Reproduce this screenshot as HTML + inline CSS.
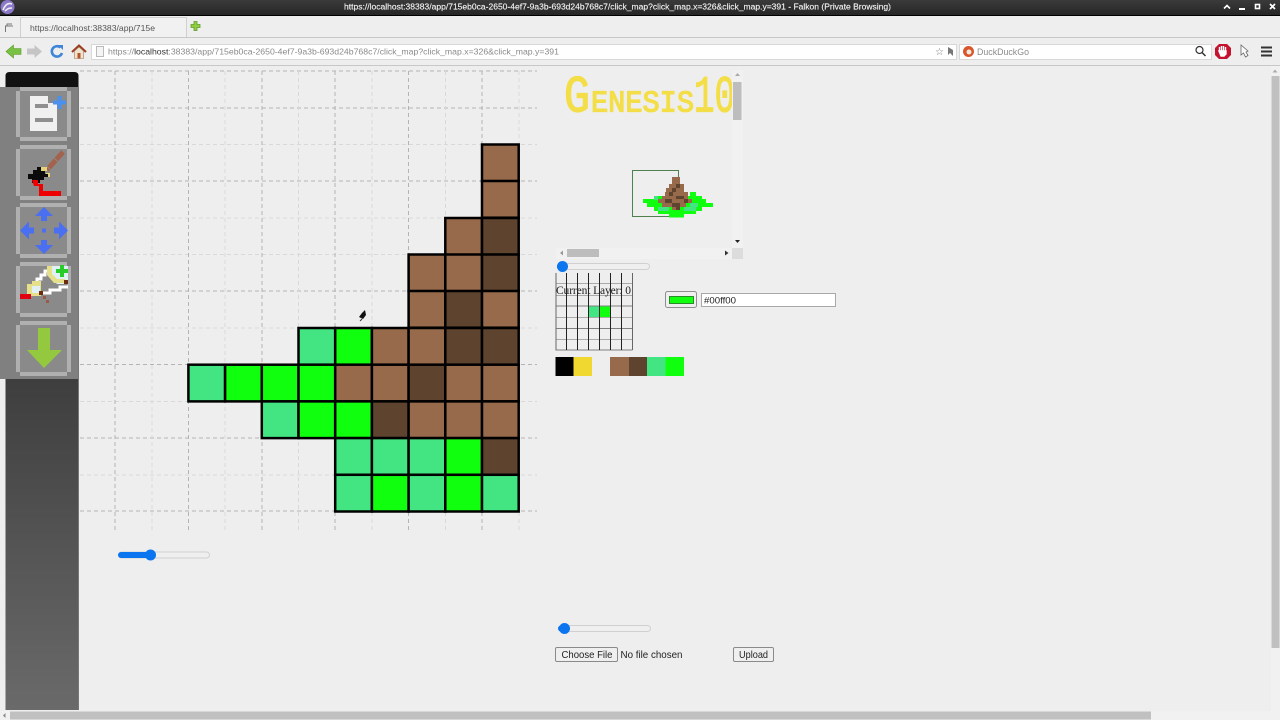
<!DOCTYPE html>
<html><head><meta charset="utf-8"><title>Falkon</title>
<style>
html,body{margin:0;padding:0;width:1280px;height:720px;overflow:hidden;background:#eee}
svg{display:block;position:absolute;left:0;top:0;filter:blur(.35px)}
text{font-family:"Liberation Sans",sans-serif}
.d{stroke:#b4b4b4;stroke-width:1;stroke-dasharray:4 3;fill:none}
.l{stroke:#d9d9d9;stroke-width:1;stroke-dasharray:4 3;fill:none}
.c rect{width:36.7px;height:36.7px;stroke:#000;stroke-width:2.5}
.b{fill:#966a4a}.k{fill:#5e432e}.m{fill:#42e582}.g{fill:#0fff0f}
.btn{fill:#b0b0b0}.inner{fill:#8a8a8a}
</style></head><body>
<svg width="1280" height="720" viewBox="0 0 1280 720" xmlns="http://www.w3.org/2000/svg">
<defs>
<linearGradient id="tb" x1="0" y1="0" x2="0" y2="1"><stop offset="0" stop-color="#3a3a3a"/><stop offset="1" stop-color="#262626"/></linearGradient>
<linearGradient id="sb" x1="0" y1="0" x2="0" y2="1"><stop offset="0" stop-color="#3e3e3e"/><stop offset="1" stop-color="#6a6a6a"/></linearGradient>
<clipPath id="gc"><rect x="555" y="70" width="178" height="50"/></clipPath>
</defs>
<rect width="1280" height="720" fill="#eee"/>

<!-- title bar -->
<rect width="1280" height="15" fill="url(#tb)"/>
<rect y="15" width="1280" height="1" fill="#000"/>
<circle cx="7.500" cy="7" r="7" fill="#8b78c8"/><path d="M3 10 C6 3 9 3 12 4 M5 11 C8 8 10 8 12 8" stroke="#eee" stroke-width="1.600" fill="none"/>
<text x="344" y="9.500" font-size="8.500" fill="#f0f0f0" stroke="#f0f0f0" stroke-width=".15" textLength="547" lengthAdjust="spacingAndGlyphs">https://localhost:38383/app/715eb0ca-2650-4ef7-9a3b-693d24b768c7/click_map?click_map.x=326&amp;click_map.y=391 - Falkon (Private Browsing)</text>
<path d="M1224 8.500 L1227 5.500 L1230 8.500" stroke="#fff" stroke-width="1.600" fill="none"/>
<rect x="1239" y="8" width="6" height="2" fill="#fff"/>
<rect x="1255.500" y="4.500" width="4" height="4" fill="none" stroke="#fff" stroke-width="1.600"/>
<path d="M1270 4 L1275 9 M1275 4 L1270 9" stroke="#fff" stroke-width="1.700"/>

<!-- tab bar -->
<rect y="37" width="1280" height="1" fill="#c8c8c8"/>
<path d="M5.500 32 V26 H13 M7 26 V24 H12" stroke="#777" stroke-width="1" fill="none"/>
<path d="M20.500 37 V17.500 H186.500 V37" fill="#f1f1f1" stroke="#cfcfcf"/>
<text x="30" y="31" font-size="8.500" fill="#555" textLength="125" lengthAdjust="spacingAndGlyphs">https://localhost:38383/app/715e</text>
<path d="M191 24.500 h3 v-3 h3 v3 h3 v3 h-3 v3 h-3 v-3 h-3z" fill="#8fcf3c" stroke="#5f9a2a" stroke-width=".8"/>

<!-- nav bar -->
<rect y="65" width="1280" height="1" fill="#c8c8c8"/>
<path d="M6 51.500 L13.500 45 V48.500 H21 V54.500 H13.500 V58z" fill="#79c142" stroke="#5d9a2e" stroke-width=".6"/>
<path d="M42 51.500 L34.500 45 V48.500 H27 V54.500 H34.500 V58z" fill="#c5c5c5"/>
<path d="M60.500 47.500 A5.200 5.200 0 1 0 62 53" stroke="#3f86d8" stroke-width="2.600" fill="none"/><path d="M58 45 L63 45 L63 50z" fill="#3f86d8"/>
<path d="M72 52 L79 45.500 L86 52" stroke="#9a3a20" stroke-width="2" fill="none"/><path d="M74.500 51 V58.500 H83.500 V51 L79 47z" fill="#efe3cf" stroke="#a07a50" stroke-width=".6"/><rect x="77.500" y="53" width="3" height="5.500" fill="#b5552e"/>
<rect x="91.500" y="44.500" width="865" height="15" fill="#fff" stroke="#d8d8d8"/>
<rect x="96.500" y="46.500" width="7" height="10" fill="#f4f4f4" stroke="#bbb"/>
<text x="108" y="54.500" font-size="8.500" fill="#8a8a8a" textLength="451" lengthAdjust="spacingAndGlyphs">https://<tspan fill="#333">localhost</tspan>:38383/app/715eb0ca-2650-4ef7-9a3b-693d24b768c7/click_map?click_map.x=326&amp;click_map.y=391</text>
<text x="935" y="55" font-size="10" fill="#777" style="font-family:'DejaVu Sans',sans-serif">☆</text>
<path d="M948 47 L948 55 L950 53 L953 56 L953 50z" fill="#777"/>
<rect x="959.500" y="44.500" width="252" height="15" fill="#fff" stroke="#d8d8d8"/>
<circle cx="968.500" cy="51.500" r="5.500" fill="#d8562c"/><circle cx="969" cy="52" r="2.500" fill="#f3e9dd"/>
<text x="977" y="55" font-size="9" fill="#8b8b8b" textLength="52" lengthAdjust="spacingAndGlyphs">DuckDuckGo</text>
<circle cx="1199.500" cy="50" r="3.500" fill="none" stroke="#333" stroke-width="1.200"/><path d="M1202 52.500 L1205.500 56" stroke="#333" stroke-width="1.500"/>
<path d="M1219 44 H1227 L1231 48 V55 L1227 59 H1219 L1215 55 V48z" fill="#c4122f"/>
<path d="M1219.500 53 V47 M1221.500 53 V46 M1223.500 53 V46 M1225.500 53 V47 M1219 51 H1226 V54 L1224 56 H1221z" stroke="#fff" stroke-width="1.400" fill="#fff"/>
<path d="M1241 45 L1241 55 L1243.500 53 L1245.500 57 L1248 55.500 L1246 52 L1248 51z" fill="#fafafa" stroke="#666" stroke-width=".8"/>
<rect x="1261" y="46.500" width="11" height="2" fill="#333"/><rect x="1261" y="50.500" width="11" height="2" fill="#333"/><rect x="1261" y="54.500" width="11" height="2" fill="#333"/>

<!-- dashed grid -->
<path class="d" d="M80 71H537M80 108H537M80 181H537M80 291H537M80 364.500H537M80 438H537M80 511H537"/>
<path class="l" d="M80 144.500H537M80 218H537M80 254.500H537M80 328H537M80 401.500H537M80 475H537"/>
<path class="d" d="M115 71V530M188.500 71V530M262 71V530M335 71V530M408.500 71V530M482 71V530"/>
<path class="l" d="M152 71V530M225 71V530M298.500 71V530M372 71V530M445.500 71V530M519 71V530"/>

<!-- painted cells -->
<g class="c">
<rect class="b" x="482" y="144.500"/>
<rect class="b" x="482" y="181"/>
<rect class="b" x="445.300" y="218"/><rect class="k" x="482" y="218"/>
<rect class="b" x="408.600" y="254.500"/><rect class="b" x="445.300" y="254.500"/><rect class="k" x="482" y="254.500"/>
<rect class="b" x="408.600" y="291"/><rect class="k" x="445.300" y="291"/><rect class="b" x="482" y="291"/>
<rect class="m" x="298.500" y="328"/><rect class="g" x="335.200" y="328"/><rect class="b" x="371.900" y="328"/><rect class="b" x="408.600" y="328"/><rect class="k" x="445.300" y="328"/><rect class="k" x="482" y="328"/>
<rect class="m" x="188.400" y="364.700"/><rect class="g" x="225.100" y="364.700"/><rect class="g" x="261.800" y="364.700"/><rect class="g" x="298.500" y="364.700"/><rect class="b" x="335.200" y="364.700"/><rect class="b" x="371.900" y="364.700"/><rect class="k" x="408.600" y="364.700"/><rect class="b" x="445.300" y="364.700"/><rect class="b" x="482" y="364.700"/>
<rect class="m" x="261.800" y="401.400"/><rect class="g" x="298.500" y="401.400"/><rect class="g" x="335.200" y="401.400"/><rect class="k" x="371.900" y="401.400"/><rect class="b" x="408.600" y="401.400"/><rect class="b" x="445.300" y="401.400"/><rect class="b" x="482" y="401.400"/>
<rect class="m" x="335.200" y="438.100"/><rect class="m" x="371.900" y="438.100"/><rect class="m" x="408.600" y="438.100"/><rect class="g" x="445.300" y="438.100"/><rect class="k" x="482" y="438.100"/>
<rect class="m" x="335.200" y="474.800"/><rect class="g" x="371.900" y="474.800"/><rect class="m" x="408.600" y="474.800"/><rect class="g" x="445.300" y="474.800"/><rect class="m" x="482" y="474.800"/>
</g>
<path d="M359 317 L362 313 L365 310 L366 315 L363 319z" fill="#111"/><path d="M360 321 L362 319" stroke="#333"/>

<!-- sidebar -->
<rect x="0" y="87" width="78.500" height="292" fill="#808080"/>
<path d="M5.500 87 V76 Q5.500 72 9.500 72 H74.500 Q78.500 72 78.500 76 V87z" fill="#111"/>
<rect x="5.500" y="379" width="73" height="331" fill="url(#sb)"/>
<rect x="78" y="87" width="1" height="623" fill="#777"/>

<!-- button frames -->
<g>
<rect class="btn" x="20" y="87" width="47" height="54"/><rect class="btn" x="16" y="91" width="55" height="46"/><rect class="inner" x="20" y="91" width="47" height="46"/>
<rect class="btn" x="20" y="145" width="47" height="55"/><rect class="btn" x="16" y="149" width="55" height="47"/><rect class="inner" x="20" y="149" width="47" height="47"/>
<rect class="btn" x="20" y="203" width="47" height="55"/><rect class="btn" x="16" y="207" width="55" height="47"/><rect class="inner" x="20" y="207" width="47" height="47"/>
<rect class="btn" x="20" y="262" width="47" height="55"/><rect class="btn" x="16" y="266" width="55" height="47"/><rect class="inner" x="20" y="266" width="47" height="47"/>
<rect class="btn" x="20" y="321" width="47" height="55"/><rect class="btn" x="16" y="325" width="55" height="47"/><rect class="inner" x="20" y="325" width="47" height="47"/>
</g>
<!-- icon 1: new doc -->
<path d="M30 96 H48 V103 H57 V131 H30z" fill="#f0f0f0"/>
<rect x="35" y="104" width="13" height="4" fill="#8f8f8f"/><rect x="35" y="118" width="18" height="4" fill="#8f8f8f"/>
<path d="M57.500 96 h4 v4.500 h4.500 v4 h-4.500 v4.500 h-4 v-4.500 h-4.500 v-4 h4.500z" fill="#4a90ee"/>
<!-- icon 2: brush -->
<path d="M63 152 L47 170" stroke="#a3624c" stroke-width="5" stroke-dasharray="10 1"/>
<rect x="41" y="167" width="6" height="4" fill="#e6d27a"/><rect x="46" y="173" width="4" height="4" fill="#e6d27a"/>
<path d="M28 174 h5 v-4 h4 v-3 h4 v4 h4 v3 h3 v3 h-4 v3 h-4 v3 h-8 v-4 h-4z" fill="#0b0b0b"/>
<path d="M32 180 H38 V184 H43 V191 H61 V196 H39 V186 H34z" fill="#ee0000"/>
<!-- icon 3: move -->
<g fill="#4a6ff0">
<path d="M44 207 L53 216 H47 V221 H41 V216 H35z"/>
<path d="M44 254 L53 245 H47 V240 H41 V245 H35z"/>
<path d="M20 230.500 L29 221.500 V227.500 H34 V233.500 H29 V239.500z"/>
<path d="M68 230.500 L59 221.500 V227.500 H54 V233.500 H59 V239.500z"/>
<rect x="42" y="228.500" width="4" height="4"/>
</g>
<!-- icon 4: clone -->
<path d="M47 266 H68 V284 H57 L47 274z" fill="#dff1f5"/>
<path d="M47 266 H52 V274 L57 279 H65 V283 H54 L47 275z" fill="#e6e08a"/>
<path d="M60 265 h4 v4 h4 v4 h-4 v4 h-4 v-4 h-4 v-4 h4z" fill="#28cc28"/>
<path d="M33 283 h4 v-4 h4 v-4 h4 v-4 h2" stroke="#fff" stroke-width="3" fill="none"/>
<rect x="27" y="284" width="14" height="12" fill="#e6e08a"/><rect x="32" y="281" width="9" height="3" fill="#e6e08a"/><rect x="32" y="286" width="8" height="7" fill="#dff1f5"/>
<rect x="20" y="294" width="11" height="5" fill="#e00010"/>
<path d="M43 293 H50 V290 H60 V287 H68" stroke="#fff" stroke-width="3" fill="none"/>
<rect x="64" y="280" width="4" height="4" fill="#6d2c10"/><rect x="39" y="291" width="4" height="4" fill="#6d2c10"/><rect x="43" y="296" width="3" height="3" fill="#9a5a48"/><rect x="46" y="300" width="3" height="3" fill="#9a5a48"/>
<!-- icon 5: down -->
<path d="M38 328 H50 V350 H62 L44 368 L27 350 H38z" fill="#93c83f"/>

<!-- title -->
<g clip-path="url(#gc)" fill="#f3de48" stroke="#f3de48" stroke-width="1.300">
<text x="564" y="111.500" font-size="52" textLength="26" lengthAdjust="spacingAndGlyphs" style="font-family:'Liberation Mono',monospace">G</text>
<text x="591" y="111.500" font-size="31" textLength="103" lengthAdjust="spacingAndGlyphs" style="font-family:'Liberation Mono',monospace">ENESIS</text>
<text x="694" y="111.500" font-size="52" textLength="41" lengthAdjust="spacingAndGlyphs" style="font-family:'Liberation Mono',monospace">10</text>
</g>

<!-- preview scrollbars -->
<rect x="732" y="70" width="11" height="179" fill="#f1f1f1"/>
<path d="M737.500 73 L740 76 H735z" fill="#aaa"/>
<rect x="733" y="82" width="8.500" height="38" fill="#bdbdbd"/>
<path d="M735 240 H740 L737.500 243z" fill="#222"/>
<rect x="556" y="248" width="176" height="11" fill="#f1f1f1"/>
<rect x="567" y="249" width="32" height="8" fill="#bdbdbd"/>
<path d="M563 250.500 V255.500 L560 253z" fill="#999"/><path d="M725 250.500 V255.500 L728.500 253z" fill="#333"/>
<rect x="732" y="248" width="11" height="11" fill="#dcdcdc"/>

<!-- minimap -->
<rect x="632.500" y="170.500" width="46" height="46" fill="none" stroke="#4f8050"/>
<g class="g">
<rect x="690" y="192" width="6" height="4"/>
<rect x="654" y="196" width="12" height="4"/><rect x="688" y="196" width="14" height="4"/>
<rect x="643" y="199" width="63" height="4"/>
<rect x="647" y="203" width="66" height="4"/>
<rect x="654" y="207" width="48" height="4"/>
<rect x="658" y="211" width="38" height="3"/>
<rect x="669" y="214" width="15" height="3.500"/>
</g>
<g class="m"><rect x="658" y="207" width="11" height="4"/><rect x="684" y="207" width="12" height="4"/><rect x="690" y="203" width="8" height="4"/><rect x="654" y="196" width="4" height="4"/></g>
<g class="b">
<rect x="672" y="177" width="8" height="7"/><rect x="669" y="184" width="15" height="4"/><rect x="666" y="188" width="18" height="4"/><rect x="665" y="192" width="23" height="4"/><rect x="662" y="196" width="26" height="4"/><rect x="658" y="199" width="34" height="4"/><rect x="662" y="203" width="24" height="4"/><rect x="672" y="207" width="8" height="3"/>
</g>
<g class="k">
<rect x="676" y="184" width="4" height="4"/><rect x="672" y="188" width="4" height="4"/><rect x="669" y="192" width="4" height="4"/><rect x="676" y="196" width="8" height="3"/><rect x="665" y="199" width="7" height="4"/><rect x="684" y="199" width="4" height="4"/><rect x="672" y="203" width="8" height="4"/><rect x="676" y="207" width="4" height="3"/>
</g>

<!-- slider 1 -->
<rect x="557.500" y="263.500" width="92" height="6" rx="3" fill="#efefef" stroke="#d0d0d0"/>
<rect x="557" y="263.500" width="6" height="6" rx="3" fill="#0b75f0"/>
<circle cx="562.500" cy="266.500" r="5.500" fill="#0b75f0"/>

<!-- layer grid -->
<rect x="588" y="306" width="11" height="11" class="m"/><rect x="599" y="306" width="11" height="11" class="g"/>
<path d="M555.500 283.500H632.500M555.500 295.500H632.500M555.500 317.500H632.500M555.500 339.500H632.500" stroke="#aaa"/>
<path d="M555.500 306H632.500M555.500 328.500H632.500M555.500 350H632.500" stroke="#808080" fill="none"/>
<path d="M556 273V350" stroke="#666"/>
<path d="M566.500 273V350M577.500 273V350M588.500 273V350M599.500 273V350M610.500 273V350M621.500 273V350" stroke="#222"/>
<path d="M632.500 273V350" stroke="#666"/>
<text x="556" y="294" font-size="11.500" fill="#222" textLength="75" lengthAdjust="spacing" style="font-family:'Liberation Serif',serif">Current Layer: 0</text>

<!-- palette -->
<rect x="555.500" y="357" width="18" height="19" fill="#000"/>
<rect x="573.500" y="357" width="18.500" height="19" fill="#f0d830"/>
<rect x="610" y="357" width="19" height="19" class="b"/>
<rect x="629" y="357" width="18" height="19" class="k"/>
<rect x="647" y="357" width="18.500" height="19" class="m"/>
<rect x="665.500" y="357" width="18.500" height="19" class="g"/>

<!-- color input -->
<rect x="665.500" y="291.500" width="31" height="16" rx="2" fill="#efefef" stroke="#8f8f8f"/>
<rect x="669.500" y="296.500" width="24" height="7" fill="#0fff0f" stroke="#2a8a2a"/>
<rect x="701.500" y="293.500" width="134" height="13" fill="#fff" stroke="#a8a8a8"/>
<text x="704" y="303.500" font-size="9.500" fill="#222" textLength="32" lengthAdjust="spacingAndGlyphs">#00ff00</text>

<!-- left slider -->
<rect x="118.500" y="552" width="91" height="6" rx="3" fill="#efefef" stroke="#d0d0d0"/>
<rect x="118" y="552" width="33" height="6" rx="3" fill="#0b75f0"/>
<circle cx="150.500" cy="555" r="5.500" fill="#0b75f0"/>

<!-- bottom slider -->
<rect x="558.500" y="625.500" width="92" height="6" rx="3" fill="#efefef" stroke="#d0d0d0"/>
<rect x="558" y="625.500" width="7" height="6" rx="3" fill="#0b75f0"/>
<circle cx="564.500" cy="628.500" r="5.500" fill="#0b75f0"/>

<!-- file input -->
<rect x="555.500" y="647.500" width="62" height="14" rx="1.500" fill="#efefef" stroke="#8a8a8a"/>
<text x="561.500" y="658" font-size="10.500" fill="#222" textLength="51" lengthAdjust="spacingAndGlyphs">Choose File</text>
<text x="620.500" y="658" font-size="10.500" fill="#222" textLength="62" lengthAdjust="spacingAndGlyphs">No file chosen</text>
<rect x="733.500" y="647.500" width="40" height="14" rx="1.500" fill="#efefef" stroke="#8a8a8a"/>
<text x="739" y="658" font-size="10.500" fill="#222" textLength="29" lengthAdjust="spacingAndGlyphs">Upload</text>

<!-- page scrollbars -->
<rect x="1271" y="66" width="9" height="645" fill="#f1f1f1"/>
<path d="M1275 69.500 L1277.500 72.500 H1272.500z" fill="#aaa"/>
<rect x="1271.500" y="76" width="8" height="572" fill="#c0c0c0"/>
<rect x="0" y="711" width="1280" height="9" fill="#f1f1f1"/>
<path d="M5.500 713 V718 L3 715.500z" fill="#888"/>
<rect x="10" y="711.500" width="1141" height="8" fill="#c0c0c0"/>
</svg>
</body></html>
